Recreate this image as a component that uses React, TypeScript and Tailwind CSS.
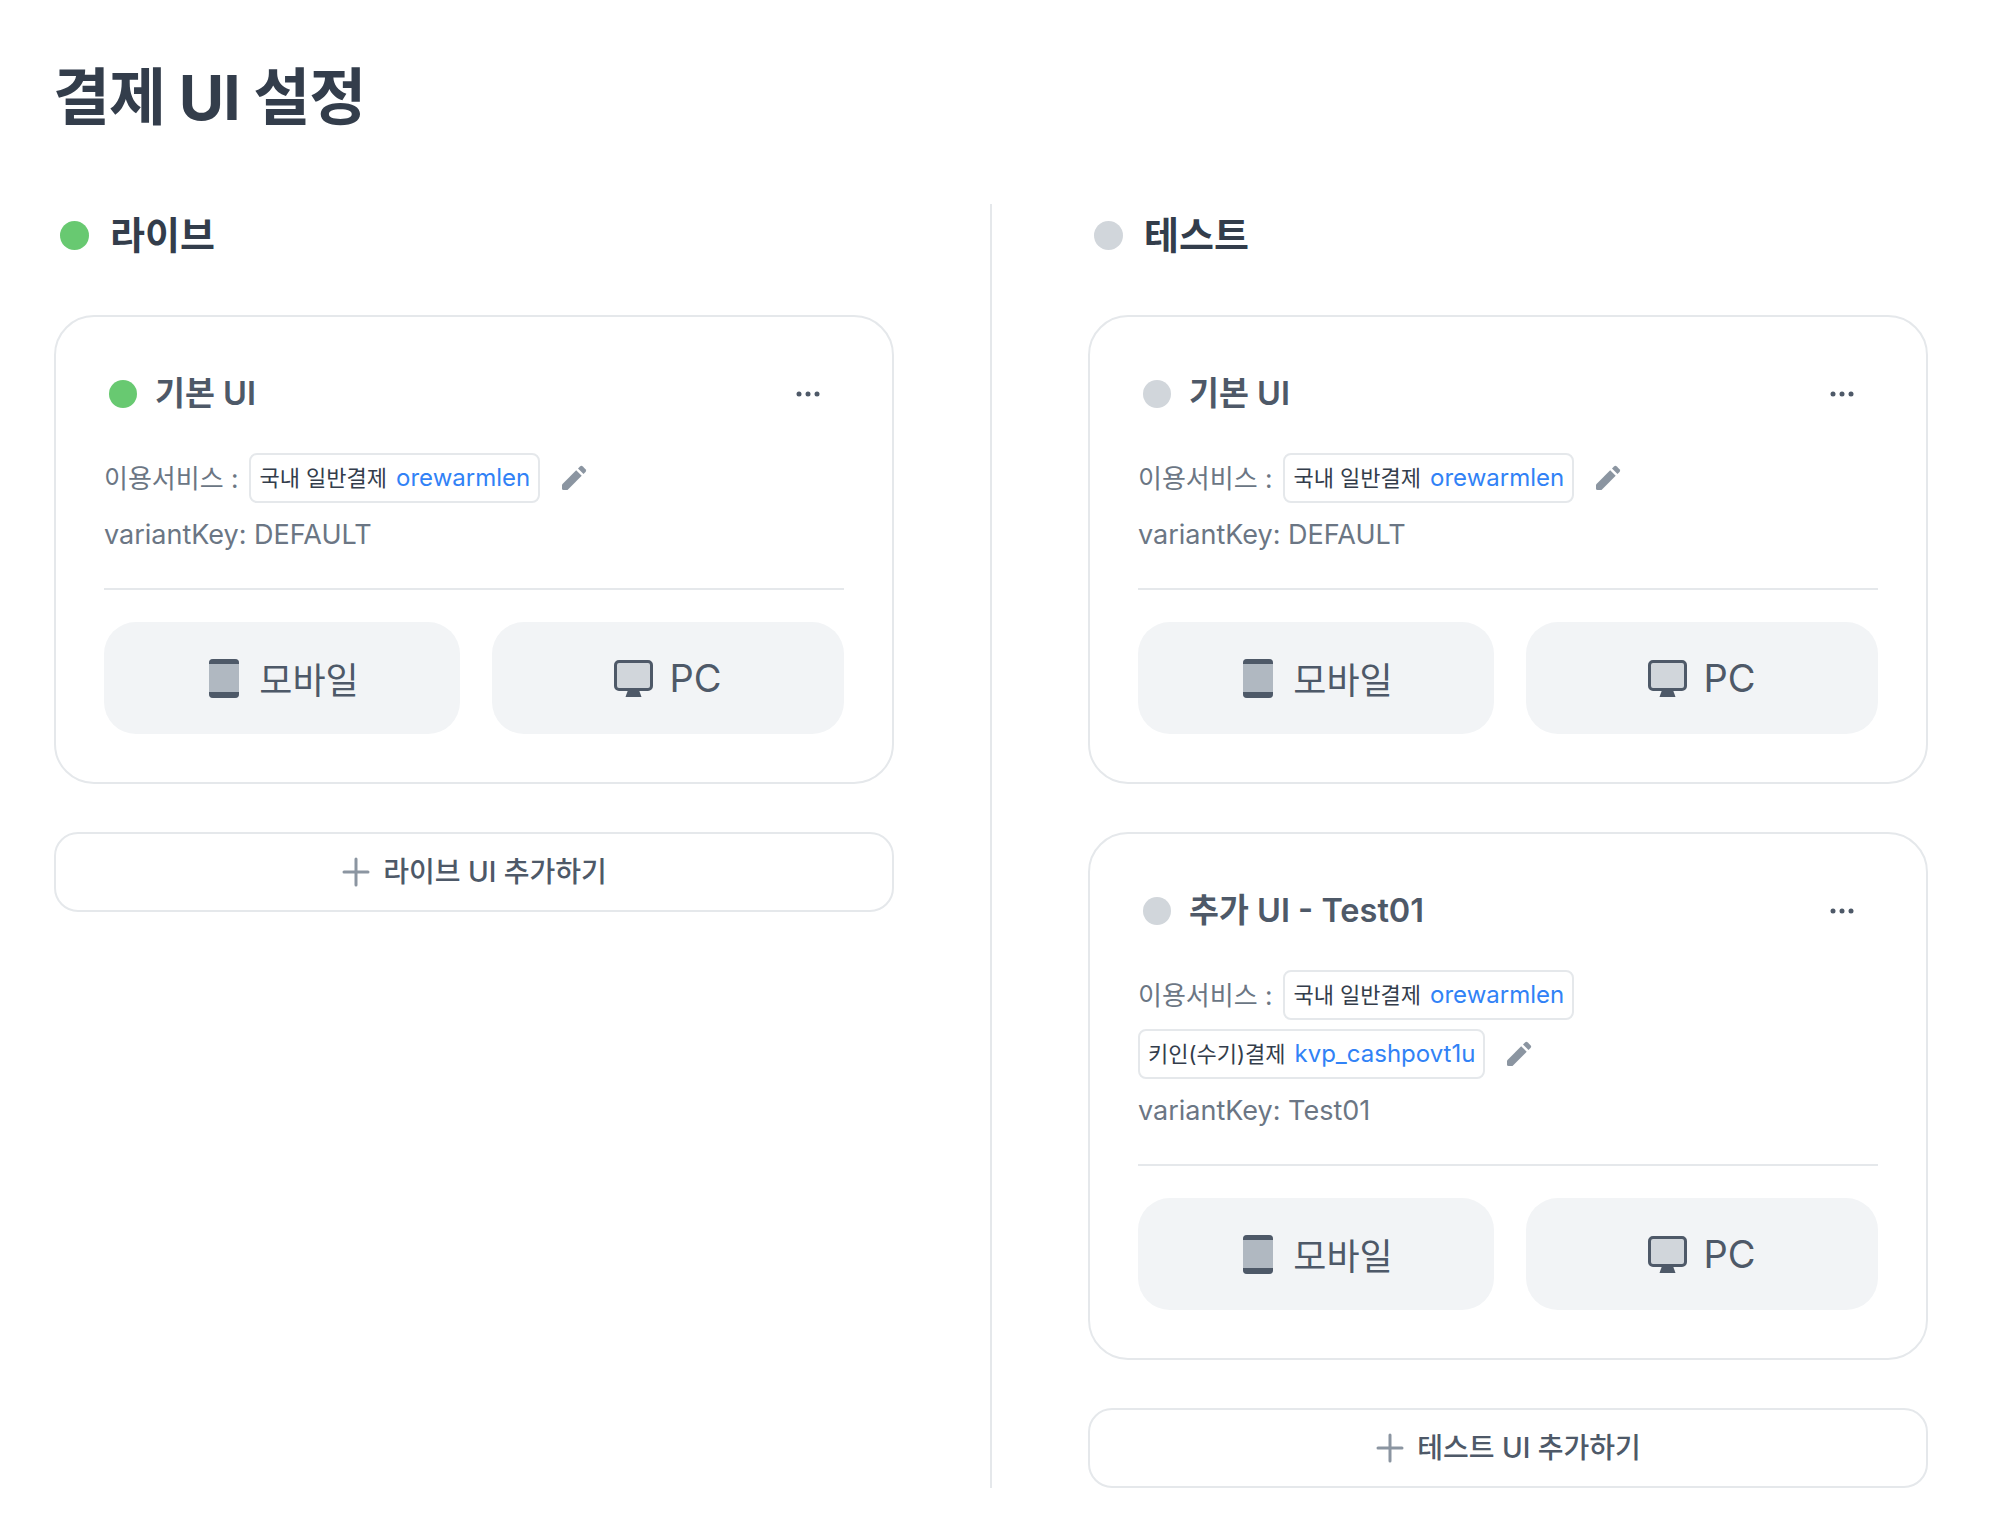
const font = "font-['Inter','Noto_Sans_CJK_KR',sans-serif]";

function Pencil() {
  return (
    <svg width="28" height="28" viewBox="0 0 28 28" className="block shrink-0">
      <path d="M2 20.5 L16.2 6.3 L21.7 11.8 L7.5 26 H3.5 A1.5 1.5 0 0 1 2 24.5 Z" fill="#8b95a1" />
      <path d="M18 4.5 L20 2.5 A2 2 0 0 1 22.8 2.5 L25.5 5.2 A2 2 0 0 1 25.5 8 L23.5 10 Z" fill="#8b95a1" />
    </svg>
  );
}

function Mobile() {
  return (
    <svg width="30" height="39" viewBox="0 0 30 39" className="block shrink-0">
      <rect x="0" y="0" width="30" height="39" rx="4" fill="#b0b8c1" />
      <path d="M0 5 V4 A4 4 0 0 1 4 0 H26 A4 4 0 0 1 30 4 V5 Z" fill="#4e5968" />
      <path d="M0 33 V35 A4 4 0 0 0 4 39 H26 A4 4 0 0 0 30 35 V33 Z" fill="#4e5968" />
    </svg>
  );
}

function Monitor() {
  return (
    <svg width="39" height="37" viewBox="0 0 39 37" className="block shrink-0">
      <rect x="1.5" y="1.5" width="36" height="28" rx="3.5" fill="#d1d6db" stroke="#4e5968" strokeWidth="3" />
      <path d="M14 30 H25 L27.5 37 H11.5 Z" fill="#4e5968" />
    </svg>
  );
}

function Dots() {
  return (
    <svg width="24" height="6" viewBox="0 0 24 6" className="block">
      <circle cx="3" cy="3" r="2.5" fill="#4e5968" />
      <circle cx="12" cy="3" r="2.5" fill="#4e5968" />
      <circle cx="21" cy="3" r="2.5" fill="#4e5968" />
    </svg>
  );
}

function Chip({ name, id }: { name: string; id: string }) {
  return (
    <span className="inline-flex h-[50px] items-center gap-[9px] rounded-[8px] border-2 border-[#e5e8eb] bg-white px-[8px] whitespace-nowrap">
      <span className="text-[22px] text-[#333d4b]">{name}</span>
      <span className="text-[24px] text-[#3182f6]">{id}</span>
    </span>
  );
}

function MobileButton() {
  return (
    <div className="flex h-[112px] flex-1 items-center justify-center gap-[20px] rounded-[32px] bg-[#f2f4f6] pl-[4px] text-[#4e5968]">
      <Mobile />
      <span className="pt-[5px] text-[36px]">모바일</span>
    </div>
  );
}

function PcButton() {
  return (
    <div className="flex h-[112px] flex-1 items-center justify-center gap-[16px] rounded-[32px] bg-[#f2f4f6] text-[#4e5968]">
      <Monitor />
      <span className="text-[38px]">PC</span>
    </div>
  );
}

function Card({
  title,
  live,
  chips,
  variant,
}: {
  title: string;
  live: boolean;
  chips: { name: string; id: string }[];
  variant: string;
}) {
  return (
    <div className="rounded-[40px] border-2 border-[#e5e8eb] bg-white px-[48px] pt-[47px] pb-[48px]">
      <div className="mt-[16px] flex h-[28px] items-center justify-between pr-[24px] pl-[5px]">
        <div className="flex items-center gap-[18px]">
          <span className={`size-[28px] rounded-full ${live ? "bg-[#68c971]" : "bg-[#d1d6db]"}`} />
          <span className="text-[32.5px] font-semibold text-[#4e5968]">{title}</span>
        </div>
        <Dots />
      </div>
      <div className="mt-[45px] flex flex-wrap items-center gap-x-[11px] gap-y-[9px] text-[26px] text-[#6b7684]">
        <span>이용서비스 :</span>
        {chips.map((c, i) => (
          <Chip key={i} {...c} />
        ))}
        <span className="ml-[9px]">
          <Pencil />
        </span>
      </div>
      <div className="mt-[9px] text-[27px] leading-[46px] text-[#6b7684]">variantKey: {variant}</div>
      <div className="mt-[30px] h-[2px] bg-[#e5e8eb]" />
      <div className="mt-[32px] flex gap-[32px]">
        <MobileButton />
        <PcButton />
      </div>
    </div>
  );
}

function Add({ label }: { label: string }) {
  return (
    <div className="flex h-[80px] items-center justify-center gap-[12px] rounded-[24px] border-2 border-[#e5e8eb] bg-white text-[28px] font-medium text-[#4e5968]">
      <svg width="30" height="30" viewBox="0 0 30 30" className="block shrink-0">
        <path d="M15 2 V28 M3 15 H27" stroke="#8b95a1" strokeWidth="3" strokeLinecap="round" />
      </svg>
      <span>{label}</span>
    </div>
  );
}

function Heading({ label, live }: { label: string; live: boolean }) {
  return (
    <div className="flex h-[40px] items-center gap-[21px] pl-[6px]">
      <span className={`size-[29px] rounded-full ${live ? "bg-[#68c971]" : "bg-[#d1d6db]"}`} />
      <span className="text-[38px] font-semibold text-[#333d4b]">{label}</span>
    </div>
  );
}

const base = { name: "국내 일반결제", id: "orewarmlen" };

export default function App() {
  return (
    <div className={`${font} min-h-[1514px] bg-white pt-[56px] pl-[54px]`}>
      <h1 className="-ml-[1px] text-[62px] leading-[84px] font-bold tracking-[-1px] text-[#333d4b]">결제 UI 설정</h1>
      <div className="mt-[64px] flex">
        <div className="w-[938px] border-r-2 border-[#e5e8eb] pr-[96px]">
          <div className="pt-[11px]">
            <Heading label="라이브" live />
          </div>
          <div className="mt-[60px] flex flex-col gap-[48px]">
            <Card title="기본 UI" live chips={[base]} variant="DEFAULT" />
            <Add label="라이브 UI 추가하기" />
          </div>
        </div>
        <div className="w-[936px] pl-[96px]">
          <div className="pt-[11px]">
            <Heading label="테스트" live={false} />
          </div>
          <div className="mt-[60px] flex flex-col gap-[48px]">
            <Card title="기본 UI" live={false} chips={[base]} variant="DEFAULT" />
            <Card
              title="추가 UI - Test01"
              live={false}
              chips={[base, { name: "키인(수기)결제", id: "kvp_cashpovt1u" }]}
              variant="Test01"
            />
            <Add label="테스트 UI 추가하기" />
          </div>
        </div>
      </div>
    </div>
  );
}
